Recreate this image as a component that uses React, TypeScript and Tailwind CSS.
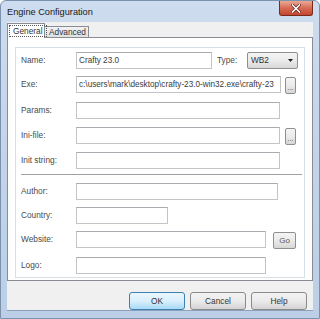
import React from "react";

const font = { fontFamily: '"Liberation Sans", Arial, sans-serif' };

function TextBox({ w, value }: { w: string; value?: string }) {
  return (
    <div
      className={`${w} h-[17px] shrink-0 overflow-hidden whitespace-nowrap border border-[#c2c4c8] border-t-[#a9abb0] bg-white pl-[2px] text-[8.2px] leading-[15px] text-[#3a3a3a]`}
    >
      {value}
    </div>
  );
}

function Label({ children }: { children: React.ReactNode }) {
  return (
    <div className="w-[55px] shrink-0 text-[8.3px] leading-[17px] text-[#4a4a4a]">
      {children}
    </div>
  );
}

function SmallButton({ w, children }: { w: string; children: React.ReactNode }) {
  return (
    <div
      className={`${w} h-[17px] mt-[1px] shrink-0 rounded-[2px] border border-[#8e8f8f] bg-gradient-to-b from-[#f4f4f4] via-[#ebebeb] to-[#d6d6d6] flex items-center justify-center text-[8px] text-[#555]`}
    >
      {children}
    </div>
  );
}

function DialogButton({ label, primary }: { label: string; primary?: boolean }) {
  return (
    <button
      className={`w-[56px] h-[18px] rounded-[3px] border text-[8.3px] text-[#333] ${
        primary
          ? "border-[#3c7fb1] bg-gradient-to-b from-[#eaf6fd] via-[#d9f0fc] to-[#a7d9f5]"
          : "border-[#8a8a8a] bg-gradient-to-b from-[#f2f2f2] via-[#ebebeb] to-[#d3d3d3]"
      }`}
    >
      {label}
    </button>
  );
}

export default function App() {
  return (
    <div
      className="w-[320px] h-[319px] flex flex-col rounded-t-[6px] border border-[#7b92ae] bg-gradient-to-b from-[#cddcee] via-[#c3d4e9] to-[#bccfe6]"
      style={font}
    >
      {/* Title bar */}
      <div className="h-[21px] flex items-start justify-between">
        <span className="pl-[6px] pt-[4px] text-[9.2px] leading-[14px] text-[#1a1a1a]">
          Engine Configuration
        </span>
        <div className="mr-[6px] w-[34px] h-[15px] rounded-b-[3px] border border-t-0 border-[#7a2a1c] bg-gradient-to-b from-[#eaa896] via-[#d76b55] to-[#c4452f] flex items-center justify-center">
          <svg width="10" height="9" viewBox="0 0 10 9">
            <path
              d="M1.5 1 L8.5 8 M8.5 1 L1.5 8"
              stroke="#5a1a10"
              strokeWidth="3"
              strokeLinecap="square"
            />
            <path
              d="M1.5 1 L8.5 8 M8.5 1 L1.5 8"
              stroke="#ffffff"
              strokeWidth="1.6"
              strokeLinecap="square"
            />
          </svg>
        </div>
      </div>

      {/* Client area */}
      <div className="flex-1 mx-[6px] mb-[7px] bg-[#f0f0f0] flex flex-col border-b border-[#8aa0bb]">
        {/* Tabs */}
        <div className="h-[15px] flex items-end">
          <div className="relative z-10 -mb-px w-[38px] h-[15px] border border-b-0 border-[#898c95] bg-white flex items-start pt-[1px] pl-[1px]">
            <span className="border border-dotted border-[#555] px-[3px] text-[8.3px] leading-[10px] text-[#333]">
              General
            </span>
          </div>
          <div className="w-[44px] h-[11px] border border-b-0 border-l-0 border-[#898c95] bg-gradient-to-b from-[#f2f2f2] to-[#e1e1e1] text-[8.3px] leading-[11px] text-[#333] pl-[4px]">
            Advanced
          </div>
        </div>

        {/* Tab panel */}
        <div className="h-[244px] border border-[#898c95] bg-white pt-[9px] pl-[7px] pr-[7px] pb-[2px]">
          <div className="h-[231px] border border-[#d5dfe5] pl-[5px] pt-[4px] flex flex-col">
            <div className="flex">
              <Label>Name:</Label>
              <TextBox w="w-[136px]" value="Crafty 23.0" />
              <div className="ml-[5px] w-[30px] text-[8.3px] leading-[17px] text-[#4a4a4a]">
                Type:
              </div>
              <div className="w-[51px] h-[17px] rounded-[2px] border border-[#8e8f8f] bg-gradient-to-b from-[#f4f4f4] via-[#ebebeb] to-[#d8d8d8] flex items-center justify-between pl-[3px] pr-[4px]">
                <span className="text-[8.3px] text-[#333]">WB2</span>
                <svg width="5" height="3" viewBox="0 0 5 3">
                  <path d="M0 0 H5 L2.5 3 Z" fill="#222" />
                </svg>
              </div>
            </div>

            <div className="flex mt-[7px]">
              <Label>Exe:</Label>
              <TextBox
                w="w-[205px]"
                value="c:\users\mark\desktop\crafty-23.0-win32.exe\crafty-23"
              />
              <div className="ml-[4px]">
                <SmallButton w="w-[11px]">
                  <span className="leading-[8px] pt-[4px]">...</span>
                </SmallButton>
              </div>
            </div>

            <div className="flex mt-[8px]">
              <Label>Params:</Label>
              <TextBox w="w-[204px]" />
            </div>

            <div className="flex mt-[8px]">
              <Label>Ini-file:</Label>
              <TextBox w="w-[204px]" />
              <div className="ml-[5px]">
                <SmallButton w="w-[11px]">
                  <span className="leading-[8px] pt-[4px]">...</span>
                </SmallButton>
              </div>
            </div>

            <div className="flex mt-[7px]">
              <Label>Init string:</Label>
              <TextBox w="w-[204px]" />
            </div>

            <div className="mt-[5px] mr-[2px] h-px bg-[#a0a0a0]" />

            <div className="flex mt-[8px]">
              <Label>Author:</Label>
              <TextBox w="w-[202px]" />
            </div>

            <div className="flex mt-[7px]">
              <Label>Country:</Label>
              <TextBox w="w-[92px]" />
            </div>

            <div className="flex mt-[7px]">
              <Label>Website:</Label>
              <TextBox w="w-[190px]" />
              <div className="ml-[7px]">
                <SmallButton w="w-[23px]">Go</SmallButton>
              </div>
            </div>

            <div className="flex mt-[8px]">
              <Label>Logo:</Label>
              <TextBox w="w-[190px]" />
            </div>
          </div>
        </div>

        {/* Button bar */}
        <div className="flex-1 flex justify-end items-start gap-[5px] pt-[11px] pr-[6px]">
          <DialogButton label="OK" primary />
          <DialogButton label="Cancel" />
          <DialogButton label="Help" />
        </div>
      </div>
    </div>
  );
}
